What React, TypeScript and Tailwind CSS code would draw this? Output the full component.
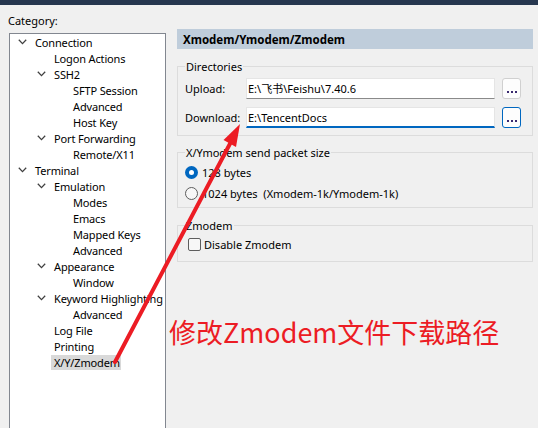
import React from "react";

type Node = { label: string; level: number; chev?: boolean; selected?: boolean };

const tree: Node[] = [
  { label: "Connection", level: 0, chev: true },
  { label: "Logon Actions", level: 1 },
  { label: "SSH2", level: 1, chev: true },
  { label: "SFTP Session", level: 2 },
  { label: "Advanced", level: 2 },
  { label: "Host Key", level: 2 },
  { label: "Port Forwarding", level: 1, chev: true },
  { label: "Remote/X11", level: 2 },
  { label: "Terminal", level: 0, chev: true },
  { label: "Emulation", level: 1, chev: true },
  { label: "Modes", level: 2 },
  { label: "Emacs", level: 2 },
  { label: "Mapped Keys", level: 2 },
  { label: "Advanced", level: 2 },
  { label: "Appearance", level: 1, chev: true },
  { label: "Window", level: 2 },
  { label: "Keyword Highlighting", level: 1, chev: true },
  { label: "Advanced", level: 2 },
  { label: "Log File", level: 1 },
  { label: "Printing", level: 1 },
  { label: "X/Y/Zmodem", level: 1, selected: true },
];

const indent = ["pl-[8px]", "pl-[27px]", "pl-[46px]"];

function Chevron() {
  return (
    <svg width="9" height="6" viewBox="0 0 9 6" className="block">
      <path d="M0.8 0.8 L4.5 4.6 L8.2 0.8" fill="none" stroke="#404040" strokeWidth="1.3" />
    </svg>
  );
}

function Dots({ blue }: { blue?: boolean }) {
  return (
    <div
      className={
        "w-[19px] h-[21px] rounded-[3px] bg-[#fdfdfd] flex items-end justify-center pb-[5px] " +
        (blue ? "border border-[#0067c0]" : "border border-[#d0d0d0]")
      }
    >
      <div className="flex gap-[2px]">
        <span className="block w-[2px] h-[2px] bg-[#3a2a70]" />
        <span className="block w-[2px] h-[2px] bg-[#3a2a70]" />
        <span className="block w-[2px] h-[2px] bg-[#3a2a70]" />
      </div>
    </div>
  );
}

export default function App() {
  return (
    <div className="relative w-[538px] h-[428px] overflow-hidden bg-[#f0f0f0] flex flex-col text-[11px] text-black font-['Noto_Sans','Liberation_Sans',sans-serif]">
      <div className="h-[5px] bg-[#26374f] shrink-0" />
      <div className="flex flex-1 min-h-0">
        {/* Left column */}
        <div className="w-[166px] shrink-0 flex flex-col pl-[9px]">
          <div className="leading-[15px] mt-[8px] -ml-px">Category:</div>
          <div className="mt-[5px] flex-1 bg-white border-l border-t border-r border-[#828790] overflow-hidden tracking-[-0.15px]">
            {tree.map((n, i) => (
              <div key={i} className={"h-[16px] flex items-center whitespace-nowrap " + indent[n.level]}>
                <div className="w-[17px] h-[16px] shrink-0 flex items-center">{n.chev ? <Chevron /> : null}</div>
                <span
                  className={
                    "whitespace-nowrap leading-[15px] " +
                    (n.selected ? "bg-[#d9d9d9] -ml-[3px] pl-[3px] pr-[1px]" : "")
                  }
                >
                  {n.label}
                </span>
              </div>
            ))}
          </div>
        </div>

        {/* Right column */}
        <div className="ml-[11px] w-[356px] shrink-0 flex flex-col">
          <div className="mt-[24px] h-[20px] bg-[#bfcddb] flex items-center pl-[6px] font-bold text-[11.5px] leading-[15px]">
            Xmodem/Ymodem/Zmodem
          </div>

          <fieldset className="mt-[10px] border border-[#dcdcdc] px-[7px] pb-[7px] pr-[11px]">
            <legend className="px-[1px] leading-[15px]">Directories</legend>
            <div className="flex items-center mt-[4px]">
              <div className="w-[61px] leading-[15px]">Upload:</div>
              <div className="w-[249px] h-[21px] bg-white border border-[#e5e5e5] border-b-[#8a8a8a] flex items-center pl-[1px] leading-[15px] font-['Noto_Sans','Noto_Sans_CJK_SC',sans-serif]">
                E:\飞书\Feishu\7.40.6
              </div>
              <div className="ml-[7px]">
                <Dots />
              </div>
            </div>
            <div className="flex items-center mt-[8px]">
              <div className="w-[61px] leading-[15px]">Download:</div>
              <div className="w-[249px] h-[21px] bg-white border border-[#e5e5e5] border-b-2 border-b-[#0067c0] flex items-center pl-[1px] leading-[15px]">
                E:\TencentDocs
              </div>
              <div className="ml-[7px]">
                <Dots blue />
              </div>
            </div>
          </fieldset>

          <fieldset className="mt-[9px] border border-[#dcdcdc] px-[7px] pb-[3px]">
            <legend className="px-[1px] leading-[15px]">X/Ymodem send packet size</legend>
            <div className="flex items-center h-[21px] mt-[2px]">
              <div className="w-[13px] h-[13px] rounded-full bg-[#0067c0] flex items-center justify-center">
                <div className="w-[5px] h-[5px] rounded-full bg-white" />
              </div>
              <span className="ml-[4px] leading-[15px]">128 bytes</span>
            </div>
            <div className="flex items-center h-[21px]">
              <div className="w-[13px] h-[13px] rounded-full border border-[#5d5d5d] bg-[#f7f7f7]" />
              <span className="ml-[4px] leading-[15px] whitespace-pre">1024 bytes  (Xmodem-1k/Ymodem-1k)</span>
            </div>
          </fieldset>

          <fieldset className="mt-[10px] border border-[#dcdcdc] px-[10px] pb-[8px]">
            <legend className="-ml-[3px] px-[1px] leading-[15px]">Zmodem</legend>
            <div className="flex items-center h-[18px] mt-[2px]">
              <div className="w-[13px] h-[13px] rounded-[2px] border border-[#5d5d5d] bg-[#f7f7f7]" />
              <span className="ml-[3px] leading-[15px]">Disable Zmodem</span>
            </div>
          </fieldset>

          <div className="mt-[52px] -ml-[8px] h-[36px] leading-[36px] text-[27px] text-[#ec1c24] whitespace-nowrap font-['Noto_Sans_CJK_SC','Noto_Sans',sans-serif]">
            修改Zmodem文件下载路径
          </div>
        </div>
      </div>

      {/* Annotation arrow overlay */}
      <svg className="absolute inset-0 pointer-events-none" width="538" height="428" viewBox="0 0 538 428">
        <line x1="115" y1="362" x2="233" y2="138" stroke="#ec1c24" strokeWidth="4" strokeLinecap="round" />
        <polygon points="240,124 236,147 223.5,140" fill="#ec1c24" />
      </svg>
    </div>
  );
}
